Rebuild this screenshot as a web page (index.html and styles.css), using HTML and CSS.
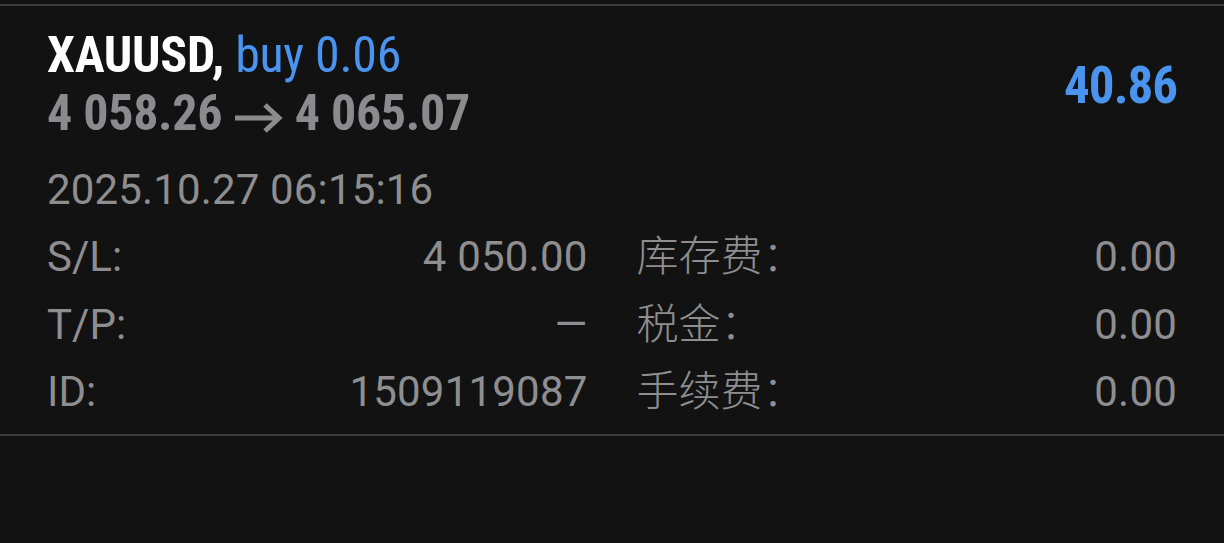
FILE: index.html
```html
<!DOCTYPE html>
<html lang="zh">
<head>
<meta charset="utf-8">
<title>XAUUSD</title>
<link rel="stylesheet" href="styles.css">
</head>
<body>
<div class="screen">
  <div class="position">
    <div class="header">
      <div class="title-block">
        <div class="title"><span class="symbol">XAUUSD,</span> <span class="side">buy 0.06</span></div>
        <div class="prices">4 058.26 <svg class="arrow" width="50" height="32" viewBox="0 0 50 32" aria-label="→"><path d="M1 16 H46 M31 3 L45 16 L31 29" fill="none" stroke="#8b8b8e" stroke-width="5"/></svg> 4 065.07</div>
      </div>
      <div class="profit">40.86</div>
    </div>
    <div class="time">2025.10.27 06:15:16</div>
    <div class="details">
      <div class="row"><span class="label">S/L:</span><span class="value">4 050.00</span></div>
      <div class="row"><span class="label cjk">库存费：</span><span class="value">0.00</span></div>
      <div class="row"><span class="label">T/P:</span><span class="value">—</span></div>
      <div class="row"><span class="label cjk">税金：</span><span class="value">0.00</span></div>
      <div class="row"><span class="label">ID:</span><span class="value">1509119087</span></div>
      <div class="row"><span class="label cjk">手续费：</span><span class="value">0.00</span></div>
    </div>
  </div>
</div>
</body>
</html>
```
FILE: styles.css
```css
html, body {
  margin: 0;
  padding: 0;
  background: #121212;
}
body {
  font-family: Roboto, "Noto Sans CJK SC", sans-serif;
  color: #8e8e90;
}
.screen {
  width: 1224px;
  height: 543px;
  padding-top: 4px;
  box-sizing: border-box;
}
.position {
  border-top: 2px solid #3d3d3d;
  border-bottom: 2px solid #3d3d3d;
  padding: 20px 47px 9px 47px;
}
.header {
  display: flex;
  justify-content: space-between;
  align-items: center;
}
.title, .prices, .profit {
  font-family: "Roboto Condensed", Roboto, sans-serif;
  font-stretch: condensed;
  font-weight: 700;
  font-size: 50px;
  line-height: 58px;
  letter-spacing: -0.3px;
}
.symbol { color: #ffffff; }
.side { color: #4a93ee; font-weight: 400; }
.prices { color: #8b8b8e; }
.arrow {
  display: inline-block;
  vertical-align: -4px;
}
.profit {
  color: #4a93ee;
  font-size: 51px;
  letter-spacing: -1px;
  padding-top: 4px;
}
.time {
  font-size: 42px;
  line-height: 67.3px;
  margin-top: 14px;
  letter-spacing: 0.15px;
}
.details {
  display: grid;
  grid-template-columns: 1fr 1fr;
  column-gap: 49px;
}
.row {
  display: flex;
  justify-content: space-between;
  align-items: baseline;
  font-size: 42px;
  line-height: 67.3px;
  height: 67.3px;
}
.value {
  letter-spacing: 0.2px;
}
.cjk {
  font-family: "Noto Sans CJK SC", sans-serif;
  font-weight: 300;
  line-height: 42px;
}
```
